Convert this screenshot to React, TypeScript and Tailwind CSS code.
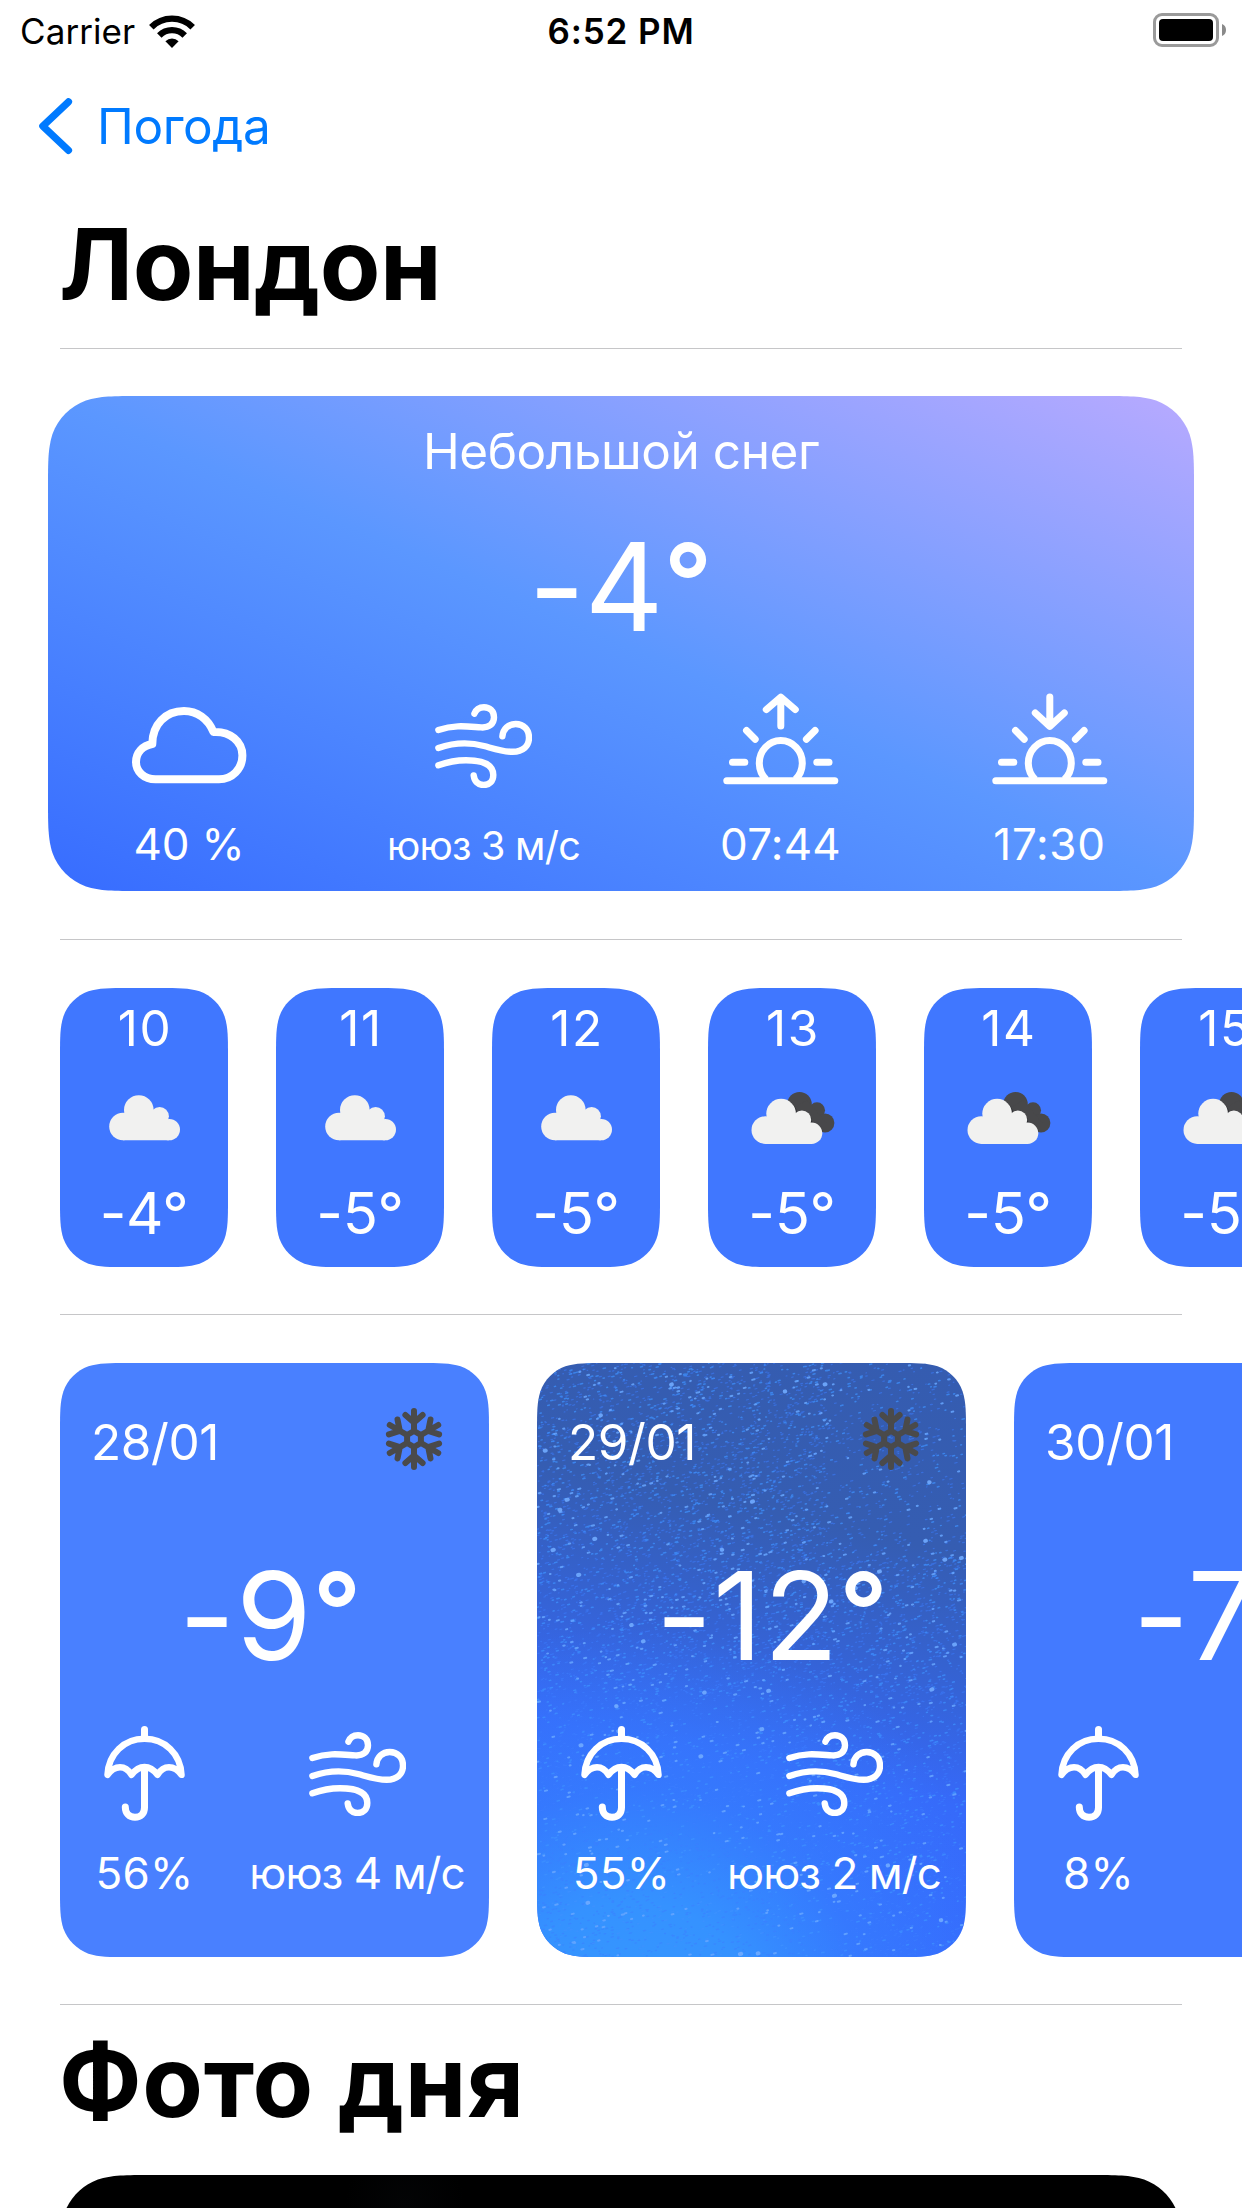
import React, { ReactNode, useLayoutEffect, useRef, useState } from "react";

/** Outline of a rectangle with continuous (iOS style) corners. */
function continuousRect(w: number, h: number, r: number) {
  const a = 1.52866 * r;
  const b = 1.08849 * r;
  const c = 0.86841 * r;
  const d = 0.63149 * r;
  const e = 0.07491 * r;
  const f = 0.37282 * r;
  const g = 0.16906 * r;
  return [
    `M${a} 0`,
    `H${w - a}`,
    `C${w - b} 0 ${w - c} 0 ${w - d} ${e}`,
    `C${w - f} ${g} ${w - g} ${f} ${w - e} ${d}`,
    `C${w} ${c} ${w} ${b} ${w} ${a}`,
    `V${h - a}`,
    `C${w} ${h - b} ${w} ${h - c} ${w - e} ${h - d}`,
    `C${w - g} ${h - f} ${w - f} ${h - g} ${w - d} ${h - e}`,
    `C${w - c} ${h} ${w - b} ${h} ${w - a} ${h}`,
    `H${a}`,
    `C${b} ${h} ${c} ${h} ${d} ${h - e}`,
    `C${f} ${h - g} ${g} ${h - f} ${e} ${h - d}`,
    `C0 ${h - c} 0 ${h - b} 0 ${h - a}`,
    `V${a}`,
    `C0 ${b} 0 ${c} ${e} ${d}`,
    `C${g} ${f} ${f} ${g} ${d} ${e}`,
    `C${c} 0 ${b} 0 ${a} 0Z`,
  ].join("");
}

function Card({ radius, className, children }: { radius: number; className: string; children?: ReactNode }) {
  const ref = useRef<HTMLDivElement>(null);
  const [clip, setClip] = useState<string>();
  useLayoutEffect(() => {
    const el = ref.current;
    if (el) setClip(`path("${continuousRect(el.offsetWidth, el.offsetHeight, radius)}")`);
  }, [radius]);
  return (
    <div ref={ref} className={className} style={{ clipPath: clip }}>
      {children}
    </div>
  );
}

function Divider() {
  return <div className="mx-[60px] h-px shrink-0 bg-[#c6c6c8]" />;
}

function WifiIcon() {
  return (
    <svg className="h-[33px] w-[46px]" viewBox="0 0 46 33" fill="none" stroke="#000">
      <path d="M2.3 12.2a29.3 29.3 0 0 1 41.4 0" strokeWidth="6.4" />
      <path d="M10.3 20.4a18 18 0 0 1 25.4 0" strokeWidth="6.4" />
      <path d="M23 33l-6.6-6.7a9.4 9.4 0 0 1 13.2 0z" fill="#000" stroke="none" />
    </svg>
  );
}

function BatteryIcon() {
  return (
    <svg className="h-[34px] w-[74px]" viewBox="0 0 74 34" fill="none">
      <rect x="1.5" y="1.5" width="63" height="31" rx="7.5" stroke="#9a9a9a" strokeWidth="3" />
      <rect x="6" y="6" width="54" height="22" rx="4" fill="#000" />
      <path d="M69 11c2.6 1 4 3.200 4 6s-1.400 5-4 6z" fill="#8a8a8a" />
    </svg>
  );
}

function CloudIcon() {
  return (
    <svg className="h-[77px] w-[115px]" viewBox="0 0 115 77" fill="none" stroke="#fff" strokeWidth="8" strokeLinejoin="round">
      <path d="M23.500 72.300C12 72.300 4 64.500 4 55C4 46 10.500 38.500 20.300 37C20.300 17.500 33.500 4 52 4C65 4 76 11.500 81.500 25C98 24 110.400 34.500 110.400 48.500C110.400 62 100 72.300 87 72.300Z" />
    </svg>
  );
}

function WindIcon() {
  return (
    <svg className="h-[84px] w-[97px]" viewBox="0 0 97 84" fill="none" stroke="#fff" strokeWidth="6.4" strokeLinecap="round">
      <path d="M3.400 26C20 20.500 32 22.500 46 23.400C54 24 59 20 59 13.300C59 7 54.500 3.200 49 3.200C44.500 3.200 41 5.500 39.400 9.700" />
      <path d="M3.400 44C22 37.500 36 38.500 49 42C60 45 68 47.800 77.700 47.800C88 47.800 94 42 94 33.700C94 25.500 88.500 20 80.700 20C73.500 20 68 25 67.400 32.300" />
      <path d="M3.400 61.300C14 57.500 22 56.300 31 56.300C48 56.300 58.300 61 58.300 71C58.300 77 54.500 81 48.600 81C43 81 39.500 77.500 38.700 71.500" />
    </svg>
  );
}

function SunHorizonIcon({ rising }: { rising: boolean }) {
  return (
    <svg className="h-[92px] w-[116px]" viewBox="0 0 116 92" fill="none" stroke="#fff" strokeWidth="7" strokeLinecap="round" strokeLinejoin="round">
      <path d="M3.800 87.700H111.800" />
      <path d="M43.200 86.500A21.500 22.500 0 1 1 72.400 86.500" strokeLinecap="butt" />
      <path d="M9.500 69.300H21.800M93.800 69.300H106" />
      <path d="M23.500 37.500L32.200 46.200M92.100 37.500L83.400 46.200" />
      {rising ? (
        <path d="M57.800 5V33M43.300 16.600L57.800 4.200L72.300 16.600" />
      ) : (
        <path d="M57.800 4V33M43.300 20L57.800 33.400L72.300 20" />
      )}
    </svg>
  );
}

function UmbrellaIcon() {
  return (
    <svg className="h-[95px] w-[81px]" viewBox="0 0 81 95" fill="none" stroke="#fff" strokeWidth="7" strokeLinecap="round" strokeLinejoin="round">
      <path d="M40.500 3.500V12" />
      <path d="M3.500 48.800C4.500 28 20 12.800 40.500 12.800C61 12.800 76.500 28 77.500 48.800C74 44 70 41.300 65 41.300C60 41.300 56.500 44 53.500 48.800C49.500 43.500 45.500 41 40.500 41C35.500 41 31.500 43.500 27.500 48.800C24.500 44 21 41.300 16 41.300C11 41.300 7 44 3.500 48.800Z" strokeWidth="6.500" />
      <path d="M40.500 42V81.500C40.500 88 36.500 91.300 31 91.300C25.500 91.300 21.300 87.500 21.300 81" />
    </svg>
  );
}

function SnowflakeIcon() {
  return (
    <svg className="h-[64px] w-[60px]" viewBox="-30 -32 60 64" fill="none" stroke="#4a4a4b" strokeWidth="6" strokeLinecap="round" strokeLinejoin="round">
      <path d="M0 -8L6.900 -4V4L0 8L-6.900 4V-4Z" strokeWidth="6" />
      {[0, 60, 120, 180, 240, 300].map((angle) => (
        <path key={angle} d="M0 -8V-28M-8.600 -24L0 -16.400L8.600 -24" transform={`rotate(${angle})`} />
      ))}
    </svg>
  );
}

function CloudShape() {
  return (
    <>
      <circle cx="14" cy="31.500" r="13.800" />
      <circle cx="29.800" cy="15" r="14.800" />
      <circle cx="50.600" cy="21.300" r="9.300" />
      <circle cx="60.300" cy="34.600" r="10.700" />
      <path d="M14 20H52L60 30V45.300H14Z" />
    </>
  );
}

function SmallCloudIcon() {
  return (
    <svg className="h-[46px] w-[71px]" viewBox="0 0 71 46" fill="#f1f1f0">
      <CloudShape />
    </svg>
  );
}

function DoubleCloudIcon() {
  return (
    <svg className="ml-0.5 h-[53px] w-[84px]" viewBox="0 0 84 53">
      <g fill="#48484a">
        <circle cx="48.500" cy="12.300" r="12.300" />
        <circle cx="66" cy="18.300" r="8" />
        <circle cx="74" cy="31" r="9.400" />
        <path d="M40 18L56 8L66 20L76 32L68 40L50 36Z" />
      </g>
      <path d="M37 9.500C42 13 44.800 17.500 45.300 21.700C53 18.500 60.500 23 60.300 32.500C65.500 33 69.500 36 71 40" fill="none" stroke="#2f3033" strokeWidth="2.200" />
      <g fill="#f1f1f0" transform="translate(0.300 6.600)">
        <CloudShape />
      </g>
    </svg>
  );
}

/** Deterministic field of falling snow, one path per brightness. */
function snowPath(count: number, seed: number, size: number) {
  let s = seed;
  const rnd = () => {
    s = (s * 1664525 + 1013904223) % 4294967296;
    return s / 4294967296;
  };
  let d = "";
  for (let i = 0; i < count; i++) {
    const x = rnd() * 429;
    const y = rnd() * 594;
    const keep = rnd();
    const len = size * (0.3 + rnd());
    const density = (x > 290 && y < 190 ? 0.45 : 1) * (y > 330 ? 0.7 : 1);
    if (keep < density) d += `M${x.toFixed(1)} ${y.toFixed(1)}l${len.toFixed(1)} ${(-len * 0.25).toFixed(1)}`;
  }
  return d;
}

const faintSnow = snowPath(7000, 7, 1.8);
const midSnow = snowPath(2600, 99, 1.8);
const brightSnow = snowPath(760, 4242, 1.8);
const largeSnow = snowPath(44, 31337, 1);

function SnowBackdrop() {
  return (
    <svg className="absolute inset-0 h-full w-full" viewBox="0 0 429 594" fill="none" strokeLinecap="round">
      <path d={faintSnow} stroke="#3c7eff" strokeWidth="1.200" opacity="0.550" />
      <path d={midSnow} stroke="#3f92ff" strokeWidth="1.500" opacity="0.720" />
      <path d={brightSnow} stroke="#66a6ff" strokeWidth="2" opacity="0.850" />
      <path d={largeSnow} stroke="#70abff" strokeWidth="4" opacity="0.900" />
    </svg>
  );
}

function Temperature({ value }: { value: string }) {
  return (
    <div className="whitespace-nowrap text-[122px] leading-[120px] [font-feature-settings:'calt'_0]">
      {value}
      <span className="align-[11px] text-[106px] leading-[0] font-semibold">°</span>
    </div>
  );
}

function Summary() {
  return (
    <Card
      radius={60}
      className="mx-12 mt-[47px] mb-12 flex h-[495px] shrink-0 flex-col items-center bg-[linear-gradient(to_top_right,#376cff_0%,#5b97ff_50%,#b8aaff_100%)] text-white"
    >
      <div className="mt-[25px] text-[49.5px] leading-[60px] tracking-[-0.44px]">Небольшой снег</div>
      <div className="mt-[46px] pr-px">
        <Temperature value="-4" />
      </div>
      <div className="mt-[41px] grid w-full grid-cols-[282px_307px_287px_251px]">
        <div className="flex flex-col items-center">
          <div className="flex h-[126px] items-center pb-[11px]">
            <CloudIcon />
          </div>
          <div className="text-[44px] leading-[60px] tracking-[-0.19px]">40 %</div>
        </div>
        <div className="flex flex-col items-center">
          <div className="flex h-[126px] items-center pb-[11px]">
            <WindIcon />
          </div>
          <div className="pt-0.5 text-[39.5px] leading-[60px] tracking-[-0.75px]">ююз 3 м/с</div>
        </div>
        <div className="flex flex-col items-center">
          <div className="flex h-[126px] items-center pb-[25px]">
            <SunHorizonIcon rising />
          </div>
          <div className="text-[44px] leading-[60px] tracking-[0.2px]">07:44</div>
        </div>
        <div className="flex flex-col items-center">
          <div className="flex h-[126px] items-center pb-[25px]">
            <SunHorizonIcon rising={false} />
          </div>
          <div className="text-[44px] leading-[60px] tracking-[0.7px]">17:30</div>
        </div>
      </div>
    </Card>
  );
}

const hours = [
  { hour: "10", temp: "-4°", dark: false },
  { hour: "11", temp: "-5°", dark: false },
  { hour: "12", temp: "-5°", dark: false },
  { hour: "13", temp: "-5°", dark: true },
  { hour: "14", temp: "-5°", dark: true },
  { hour: "15", temp: "-5°", dark: true },
];

function Hourly() {
  return (
    <div className="mt-12 mb-[47px] flex shrink-0 gap-12 overflow-hidden pl-[60px] text-white">
      {hours.map(({ hour, temp, dark }) => (
        <Card key={hour} radius={45} className="flex h-[279px] w-[168px] shrink-0 flex-col items-center bg-[#4077ff]">
          <div className="mt-[10px] pl-0.5 text-[49.5px] leading-[60px] tracking-[1.6px]">{hour}</div>
          <div className="flex h-[120px] items-center">{dark ? <DoubleCloudIcon /> : <SmallCloudIcon />}</div>
          <div className="mt-[5px] text-[58px] leading-[60px] tracking-[-0.3px] [font-feature-settings:'calt'_0]">{temp}</div>
        </Card>
      ))}
    </div>
  );
}

const days = [
  { date: "28/01", temp: "-9", rain: "56%", wind: "ююз 4 м/с", tone: "bg-[#4980ff]", snowy: false },
  {
    date: "29/01",
    temp: "-12",
    rain: "55%",
    wind: "ююз 2 м/с",
    tone: "bg-[radial-gradient(circle_at_22%_112%,#3598ff_0%,#3592ff_17%,#3580ffb0_32%,#3670ff00_54%),linear-gradient(192deg,#355cb0_0%,#355db2_28%,#3563d6_48%,#3669fa_65%,#3668ff_100%)]",
    snowy: true,
  },
  { date: "30/01", temp: "-7", rain: "8%", wind: "с 1 м/с", tone: "bg-[#437aff]", snowy: false },
];

function Daily() {
  return (
    <div className="mt-12 mb-[47px] flex shrink-0 gap-12 overflow-hidden pl-[60px] text-white">
      {days.map(({ date, temp, rain, wind, tone, snowy }) => (
        <Card key={date} radius={45} className={`relative h-[594px] w-[429px] shrink-0 ${tone}`}>
          {snowy && <SnowBackdrop />}
          <div className="relative flex h-full flex-col">
            <div className="mt-[43px] flex h-[66px] items-center justify-between pr-[45px] pl-[31px]">
              <div className="pt-1.5 text-[49.5px] leading-[60px] tracking-[-0.4px]">{date}</div>
              <SnowflakeIcon />
            </div>
            <div className="mt-[84px] pl-[119px] tracking-[1px]">
              <Temperature value={temp} />
            </div>
            <div className="mt-[40px] grid grid-cols-[169px_256px]">
              <div className="flex flex-col items-center">
                <div className="flex h-[115px] items-center">
                  <UmbrellaIcon />
                </div>
                <div className="mt-3 text-[44px] leading-[60px] tracking-[0.3px]">{rain}</div>
              </div>
              <div className="flex flex-col items-center">
                <div className="flex h-[115px] items-center">
                  <WindIcon />
                </div>
                <div className="mt-3 text-[44px] leading-[60px] tracking-[-0.95px]">{wind}</div>
              </div>
            </div>
          </div>
        </Card>
      ))}
    </div>
  );
}

export default function App() {
  return (
    <div className="flex h-[2208px] w-[1242px] flex-col overflow-hidden bg-white font-[Inter,'Noto_Sans',sans-serif] text-black">
      <header className="grid h-[60px] shrink-0 grid-cols-3 items-center pr-[15px] pl-5 text-[35px]">
        <div className="flex items-center gap-[14px] pt-0.5">
          <span className="tracking-[0.08px]">Carrier</span>
          <WifiIcon />
        </div>
        <div className="pt-0.5 pr-[5px] text-center font-semibold tracking-[0.87px]">6:52 PM</div>
        <div className="flex justify-end">
          <BatteryIcon />
        </div>
      </header>

      <nav className="flex h-[132px] shrink-0 items-center gap-6 pl-[38px] text-[#007aff]">
        <svg className="h-[57px] w-[35px]" viewBox="0 0 35 57" fill="none" stroke="currentColor" strokeWidth="7.200" strokeLinecap="round" strokeLinejoin="round">
          <path d="M30.500 3.800L4.800 28.100L30.500 52.400" />
        </svg>
        <span className="text-[49.5px] leading-[60px] tracking-[-0.4px]">Погода</span>
      </nav>

      <h1 className="h-[156px] shrink-0 pl-[59px] text-[99px] leading-[144px] font-bold tracking-[-0.48px]">Лондон</h1>
      <Divider />
      <Summary />
      <Divider />
      <Hourly />
      <Divider />
      <Daily />
      <Divider />
      <h2 className="h-[170px] shrink-0 pl-[59px] text-[99px] leading-[152px] font-bold tracking-[0.65px]">Фото дня</h2>
      <Card radius={60} className="mx-[60px] h-[600px] shrink-0 bg-[radial-gradient(circle_at_345px_30px,#030405,#000_60px)]" />
    </div>
  );
}
